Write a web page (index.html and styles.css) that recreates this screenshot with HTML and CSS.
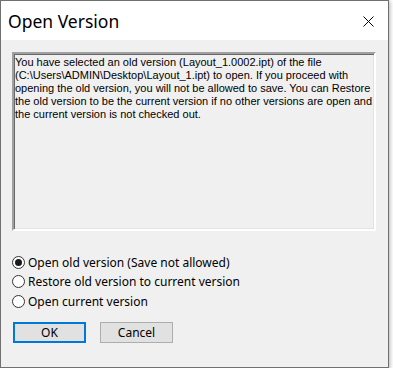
FILE: index.html
```
<!DOCTYPE html>
<html lang="en">
<head>
  <meta charset="UTF-8" />
  <title>Open Version</title>
  <link rel="stylesheet" href="styles.css">
</head>
<body>
  <div class="window">
    <div class="titlebar">
      <span class="title">Open Version</span>
      <span class="close">
        <svg width="11" height="11" viewBox="0 0 11 11"><path d="M0.5 0.5 L10.5 10.5 M10.5 0.5 L0.5 10.5" stroke="#000" stroke-width="1" fill="none"/></svg>
      </span>
    </div>

    <div class="content">
      <div class="message">
        You have selected an old version (Layout_1.0002.ipt) of the file<br>
        (C:\Users\ADMIN\Desktop\Layout_1.ipt) to open. If you proceed with<br>
        opening the old version, you will not be allowed to save. You can Restore<br>
        the old version to be the current version if no other versions are open and<br>
        the current version is not checked out.
      </div>

      <div class="options">
        <label class="option"><span class="radio checked"></span>Open old version (Save not allowed)</label>
        <label class="option"><span class="radio"></span>Restore old version to current version</label>
        <label class="option"><span class="radio"></span>Open current version</label>
      </div>

      <div class="buttons">
        <button class="btn default">OK</button>
        <button class="btn">Cancel</button>
      </div>
    </div>
  </div>
</body>
</html>
```

FILE: styles.css
```
* {
  box-sizing: border-box;
  margin: 0;
  padding: 0;
}
body {
  background: #fff;
  font-family: 'Noto Sans', 'Open Sans', sans-serif;
  color: #000;
}
.window {
  width: 389px;
  height: 368px;
  border: 1px solid #707070;
  background: #f0f0f0;
  box-shadow: 1px 1px 4px rgba(0,0,0,0.3);
  display: flex;
  flex-direction: column;
}
.titlebar {
  height: 39px;
  background: #fff;
  display: flex;
  align-items: center;
  justify-content: space-between;
  padding: 0 14px 0 7px;
}
.title {
  font-size: 17.5px;
  font-weight: 400;
}
.close {
  display: flex;
  margin-top: 2px;
}
.content {
  padding: 12px 0 0 11px;
}
.message {
  width: 364px;
  height: 179px;
  border-style: solid;
  border-width: 2px;
  border-color: #a0a0a0 #fff #fff #a0a0a0;
  box-shadow: inset 1px 1px 0 #696969, inset -1px -1px 0 #e3e3e3;
  padding: 2px 0 0 1px;
  font-family: 'Liberation Sans', Arial, sans-serif;
  font-size: 11px;
  line-height: 13px;
  white-space: nowrap;
}
.options {
  margin-top: 23px;
  display: flex;
  flex-direction: column;
  gap: 3px;
}
.option {
  display: flex;
  align-items: center;
  height: 16.5px;
  font-size: 12px;
}
.radio {
  width: 13px;
  height: 13px;
  border: 1px solid #333;
  border-radius: 50%;
  background: #fff;
  margin-right: 3px;
  display: flex;
  align-items: center;
  justify-content: center;
}
.radio.checked::after {
  content: '';
  width: 7px;
  height: 7px;
  border-radius: 50%;
  background: #1a1a1a;
}
.buttons {
  margin-top: 12px;
  display: flex;
  gap: 14px;
  padding-left: 1px;
}
.btn {
  width: 73px;
  height: 21px;
  background: #e1e1e1;
  border: 1px solid #adadad;
  font-family: 'Noto Sans', 'Open Sans', sans-serif;
  font-size: 12px;
  color: #000;
}
.btn.default {
  border: 2px solid #0078d7;
}
```
